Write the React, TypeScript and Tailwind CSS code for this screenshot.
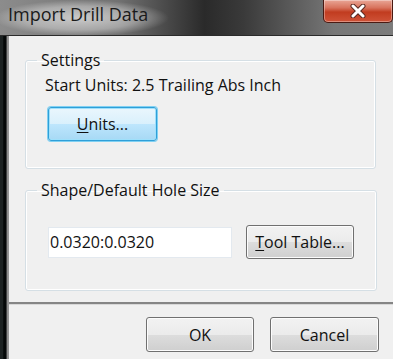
import React from "react";

const font = { fontFamily: '"Open Sans", "Noto Sans", "Liberation Sans", sans-serif' };

function WinButton({ label, mnemonic, focused, className }: { label: string; mnemonic?: boolean; focused?: boolean; className?: string }) {
  const first = mnemonic ? label.slice(0, 1) : "";
  const rest = mnemonic ? label.slice(1) : label;
  return (
    <button
      type="button"
      className={
        "flex items-center justify-center rounded-[3px] border text-[16px] leading-[22px] text-[#111] " +
        (focused
          ? "border-[#2f9fd8] bg-[linear-gradient(#eaf6fd_0%,#d9f0fc_50%,#bee6fd_50%,#a7d9f5_100%)] shadow-[inset_0_0_0_1px_#9fe0fb,0_0_0_1px_#7fd0f2] "
          : "border-[#707070] bg-[linear-gradient(#f2f2f2_0%,#ebebeb_50%,#dddddd_50%,#cfcfcf_100%)] shadow-[inset_0_0_0_1px_#fcfcfc] ") +
        (className ?? "")
      }
    >
      {mnemonic && <span className="underline underline-offset-2">{first}</span>}
      <span>{rest}</span>
    </button>
  );
}

export default function App() {
  return (
    <div className="flex h-[359px] w-[393px] flex-col overflow-hidden bg-[#6e6e6e]" style={font}>
      {/* title bar */}
      <div className="relative h-[36px] shrink-0 border-b border-[#2b2b2b] bg-[linear-gradient(90deg,#8c8c8c_0%,#727272_30%,#2a2a2a_52%,#3a3a3a_62%,#777777_85%,#7c7c7c_100%)]">
        <div className="absolute left-[-6px] top-[0px] h-[36px] w-[175px] rounded-full bg-[radial-gradient(closest-side,rgba(255,255,255,0.6),rgba(255,255,255,0.35)_65%,rgba(255,255,255,0))]" />
        <span className="absolute left-[8px] top-[2px] text-[18px] leading-[25px] text-[#1a1a1a]">Import Drill Data</span>
        <div className="absolute right-0 top-0 flex h-[23px] w-[70px] items-center justify-center rounded-b-[5px] border border-t-0 border-[#4a1a12] bg-[linear-gradient(#e9a696_0%,#d8735d_35%,#c13c20_55%,#cf5338_100%)] shadow-[inset_0_0_0_1px_rgba(255,255,255,0.35)]">
          <svg width="16" height="14" viewBox="0 0 16 14">
            <path d="M3 2 L13 12 M13 2 L3 12" stroke="#5a2a22" strokeWidth="5" strokeLinecap="round" />
            <path d="M3 2 L13 12 M13 2 L3 12" stroke="#ffffff" strokeWidth="3" strokeLinecap="round" />
          </svg>
        </div>
      </div>

      <div className="flex flex-1">
        {/* left frame */}
        <div className="w-[9px] shrink-0 bg-[linear-gradient(90deg,#1c2222_0%,#1c2222_35%,#050808_40%,#050808_70%,#8a8a8a_75%,#9a9a9a_100%)]" />

        {/* client area */}
        <div className="flex flex-1 flex-col bg-[#f0f0f0] text-[16px] text-[#111]">
          <div className="shrink-0 px-[16px] pt-[14px]">
            <fieldset className="h-[119px] w-[351px] rounded-[3px] border border-[#d5dfe5] shadow-[inset_0_0_0_1px_#ffffff]">
              <legend className="ml-[11px] px-[4px] leading-[20px]">Settings</legend>
              <div className="px-[19px]">
                <div className="mt-[4px] leading-[22px]">Start Units: 2.5 Trailing Abs Inch</div>
                <WinButton label="Units..." mnemonic focused className="mt-[11px] ml-[3px] h-[34px] w-[109px]" />
              </div>
            </fieldset>

            <fieldset className="mt-[11px] h-[111px] w-[351px] rounded-[3px] border border-[#d5dfe5] shadow-[inset_0_0_0_1px_#ffffff]">
              <legend className="ml-[11px] px-[4px] leading-[20px]">Shape/Default Hole Size</legend>
              <div className="mt-[25px] flex items-center gap-[14px] px-[22px]">
                <input
                  readOnly
                  value="0.0320:0.0320"
                  className="h-[31px] w-[184px] border border-[#e3e9ef] bg-white px-[1px] text-[16px] text-[#111] outline-none"
                  style={font}
                />
                <WinButton label="Tool Table..." mnemonic className="h-[34px] w-[108px]" />
              </div>
            </fieldset>
          </div>

          <div className="mt-[11px] h-[2px] shrink-0 bg-[#858585] shadow-[0_1px_0_#d8d8d8]" />

          <div className="flex flex-1 justify-end gap-[16px] pr-[14px] pt-[13px]">
            <WinButton label="OK" className="h-[35px] w-[108px]" />
            <WinButton label="Cancel" className="h-[35px] w-[109px]" />
          </div>
        </div>
      </div>
    </div>
  );
}
